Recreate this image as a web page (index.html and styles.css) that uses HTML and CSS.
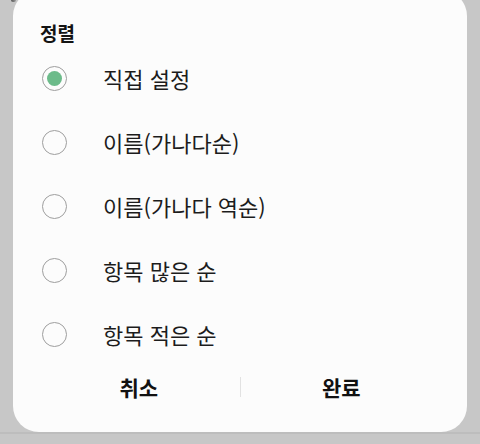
FILE: index.html
```html
<!DOCTYPE html>
<html lang="ko">
<head>
<meta charset="utf-8">
<link rel="stylesheet" href="styles.css">
</head>
<body>
<div class="screen">
  <div class="shadow-bit"></div>
  <div class="dialog">
    <div class="title">정렬</div>
    <ul class="options">
      <li class="option"><span class="radio checked"></span><span class="label">직접 설정</span></li>
      <li class="option"><span class="radio"></span><span class="label">이름(가나다순)</span></li>
      <li class="option"><span class="radio"></span><span class="label">이름(가나다 역순)</span></li>
      <li class="option"><span class="radio"></span><span class="label">항목 많은 순</span></li>
      <li class="option"><span class="radio"></span><span class="label">항목 적은 순</span></li>
    </ul>
    <div class="buttons">
      <button class="btn">취소</button>
      <span class="divider"></span>
      <button class="btn">완료</button>
    </div>
  </div>
</div>
</body>
</html>
```
FILE: styles.css
```css
* { box-sizing: border-box; }
html, body {
  margin: 0;
  padding: 0;
}
body {
  width: 480px;
  height: 444px;
  overflow: hidden;
  background: #c7c7c7;
  font-family: "Noto Sans CJK KR", "Noto Sans", sans-serif;
}
.screen {
  position: relative;
  width: 480px;
  height: 444px;
  padding-left: 13px;
  border-bottom: 2px solid #bdbdbd;
}
.shadow-bit {
  position: absolute;
  left: 11px;
  top: 0;
  width: 5px;
  height: 12px;
  background: linear-gradient(to right, #555, #9a9a9a);
  border-radius: 0 0 2px 2px;
}
.dialog {
  position: relative;
  margin-top: -10px;
  width: 454px;
  height: 442px;
  background: #fcfcfc;
  border-radius: 26px;
  padding-top: 31px;
}
.title {
  padding-left: 27px;
  font-size: 19px;
  line-height: 24px;
  font-weight: 700;
  color: #141414;
}
.options {
  list-style: none;
  margin: 1px 0 0 0;
  padding: 0;
}
.option {
  height: 64px;
  display: flex;
  align-items: center;
  padding-left: 29px;
}
.radio {
  width: 25px;
  height: 25px;
  border-radius: 50%;
  border: 1.5px solid #9e9e9e;
  display: flex;
  align-items: center;
  justify-content: center;
  flex: none;
}
.radio.checked::after {
  content: "";
  width: 15px;
  height: 15px;
  border-radius: 50%;
  background: #6cbb8a;
}
.label {
  margin-left: 36px;
  font-size: 22px;
  color: #1c1c1c;
  line-height: 30px;
}
.buttons {
  display: flex;
  align-items: center;
  height: 42px;
  padding: 0 25px;
}
.btn {
  flex: 1;
  border: 0;
  background: transparent;
  font-family: inherit;
  font-size: 21px;
  font-weight: 700;
  color: #111;
  padding: 0;
  line-height: 28px;
}
.divider {
  width: 1px;
  height: 20px;
  background: #e2e2e2;
  flex: none;
}
```
